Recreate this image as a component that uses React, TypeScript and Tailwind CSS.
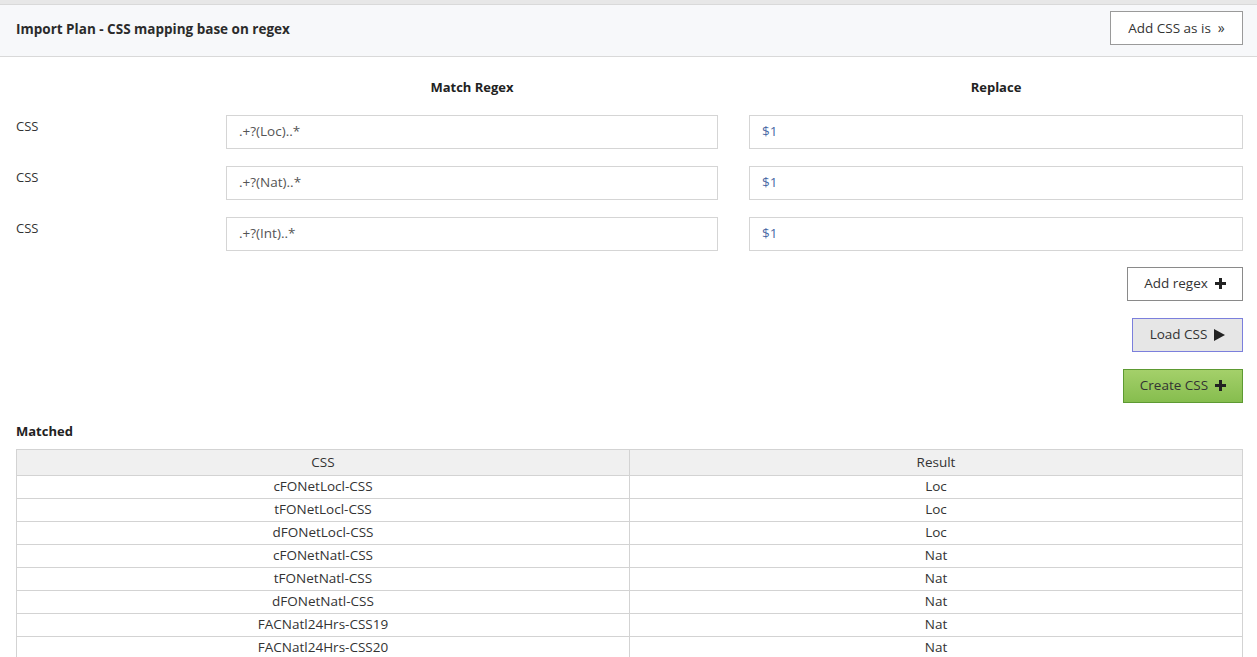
import React from "react";

const rows = [
  { re: ".+?(Loc)..*", rep: "$1" },
  { re: ".+?(Nat)..*", rep: "$1" },
  { re: ".+?(Int)..*", rep: "$1" },
];

const matched = [
  ["cFONetLocl-CSS", "Loc"],
  ["tFONetLocl-CSS", "Loc"],
  ["dFONetLocl-CSS", "Loc"],
  ["cFONetNatl-CSS", "Nat"],
  ["tFONetNatl-CSS", "Nat"],
  ["dFONetNatl-CSS", "Nat"],
  ["FACNatl24Hrs-CSS19", "Nat"],
  ["FACNatl24Hrs-CSS20", "Nat"],
];

function Plus() {
  return (
    <svg width="11" height="11" viewBox="0 0 11 11" className="ml-[7px]">
      <rect x="4" y="0" width="3" height="11" fill="#222" />
      <rect x="0" y="4" width="11" height="3" fill="#222" />
    </svg>
  );
}

function Play() {
  return (
    <svg width="11" height="12" viewBox="0 0 11 12" className="ml-[7px]">
      <polygon points="0,0 11,6 0,12" fill="#222" />
    </svg>
  );
}

export default function App() {
  return (
    <div
      className="w-[1257px] h-[657px] overflow-hidden bg-white text-[#333] text-[13px]"
      style={{ fontFamily: '"Open Sans", "Noto Sans", sans-serif' }}
    >
      <div className="h-[4px] bg-[#e7e7e7]" />
      <div className="h-[53px] bg-[#f7f8fa] border-y border-[#d9d9d9] flex items-center justify-between pl-[16px] pr-[14px] pb-[5px]">
        <div className="font-bold text-[13.5px] text-[#2b2b2b] mt-[2px]">Import Plan - CSS mapping base on regex</div>
        <button className="h-[34px] w-[133px] border border-[#9a9a9a] bg-white flex items-center justify-center text-[13.5px] text-[#333]">
          Add CSS as is
          <span className="ml-[7px] text-[14px] text-[#333] leading-none">»</span>
        </button>
      </div>

      <div className="pl-[16px] pr-[14px]">
        <div className="grid grid-cols-[179px_492px_494px] gap-x-[31px] mt-[21px]">
          <div />
          <div className="text-center font-bold text-[13px] text-[#222]">Match Regex</div>
          <div className="text-center font-bold text-[13px] text-[#222]">Replace</div>
        </div>
        <div className="flex flex-col gap-[17px] mt-[17px]">
          {rows.map((r, i) => (
            <div key={i} className="grid grid-cols-[179px_492px_494px] gap-x-[31px]">
              <div className="pt-[2px] text-[13px] text-[#333]">CSS</div>
              <div className="h-[34px] border border-[#d5d5d5] flex items-center pl-[12px] text-[#555] text-[13.5px]">
                {r.re}
              </div>
              <div className="h-[34px] border border-[#d5d5d5] flex items-center pl-[12px] text-[#4a6aa5] text-[13.5px]">
                {r.rep}
              </div>
            </div>
          ))}
        </div>

        <div className="flex flex-col items-end gap-[17px] mt-[16px]">
          <button className="h-[34px] w-[116px] border border-[#8a8a8a] bg-white flex items-center justify-center text-[13.5px] text-[#333]">
            Add regex
            <Plus />
          </button>
          <button className="h-[34px] w-[111px] border border-[#7b7fdc] bg-[#e6e6e6] flex items-center justify-center text-[13.5px] text-[#333]">
            Load CSS
            <Play />
          </button>
          <button className="h-[34px] w-[120px] border border-[#5d9a32] bg-gradient-to-b from-[#a4d06a] to-[#86bd4e] flex items-center justify-center text-[13.5px] text-[#333]">
            Create CSS
            <Plus />
          </button>
        </div>

        <div className="font-bold text-[13px] text-[#222] mt-[19px]">Matched</div>

        <table className="mt-[8px] w-[1227px] border-collapse text-[13.5px] text-[#333]">
          <thead>
            <tr className="bg-[#f0f0f0]">
              <th className="w-[613px] h-[26px] border border-[#d3d3d3] font-normal text-center p-0">CSS</th>
              <th className="h-[26px] border border-[#d3d3d3] font-normal text-center p-0">Result</th>
            </tr>
          </thead>
          <tbody>
            {matched.map(([a, b], i) => (
              <tr key={i}>
                <td className="h-[23px] border border-[#d3d3d3] text-center p-0 leading-none">{a}</td>
                <td className="h-[23px] border border-[#d3d3d3] text-center p-0 leading-none">{b}</td>
              </tr>
            ))}
          </tbody>
        </table>
      </div>
    </div>
  );
}
